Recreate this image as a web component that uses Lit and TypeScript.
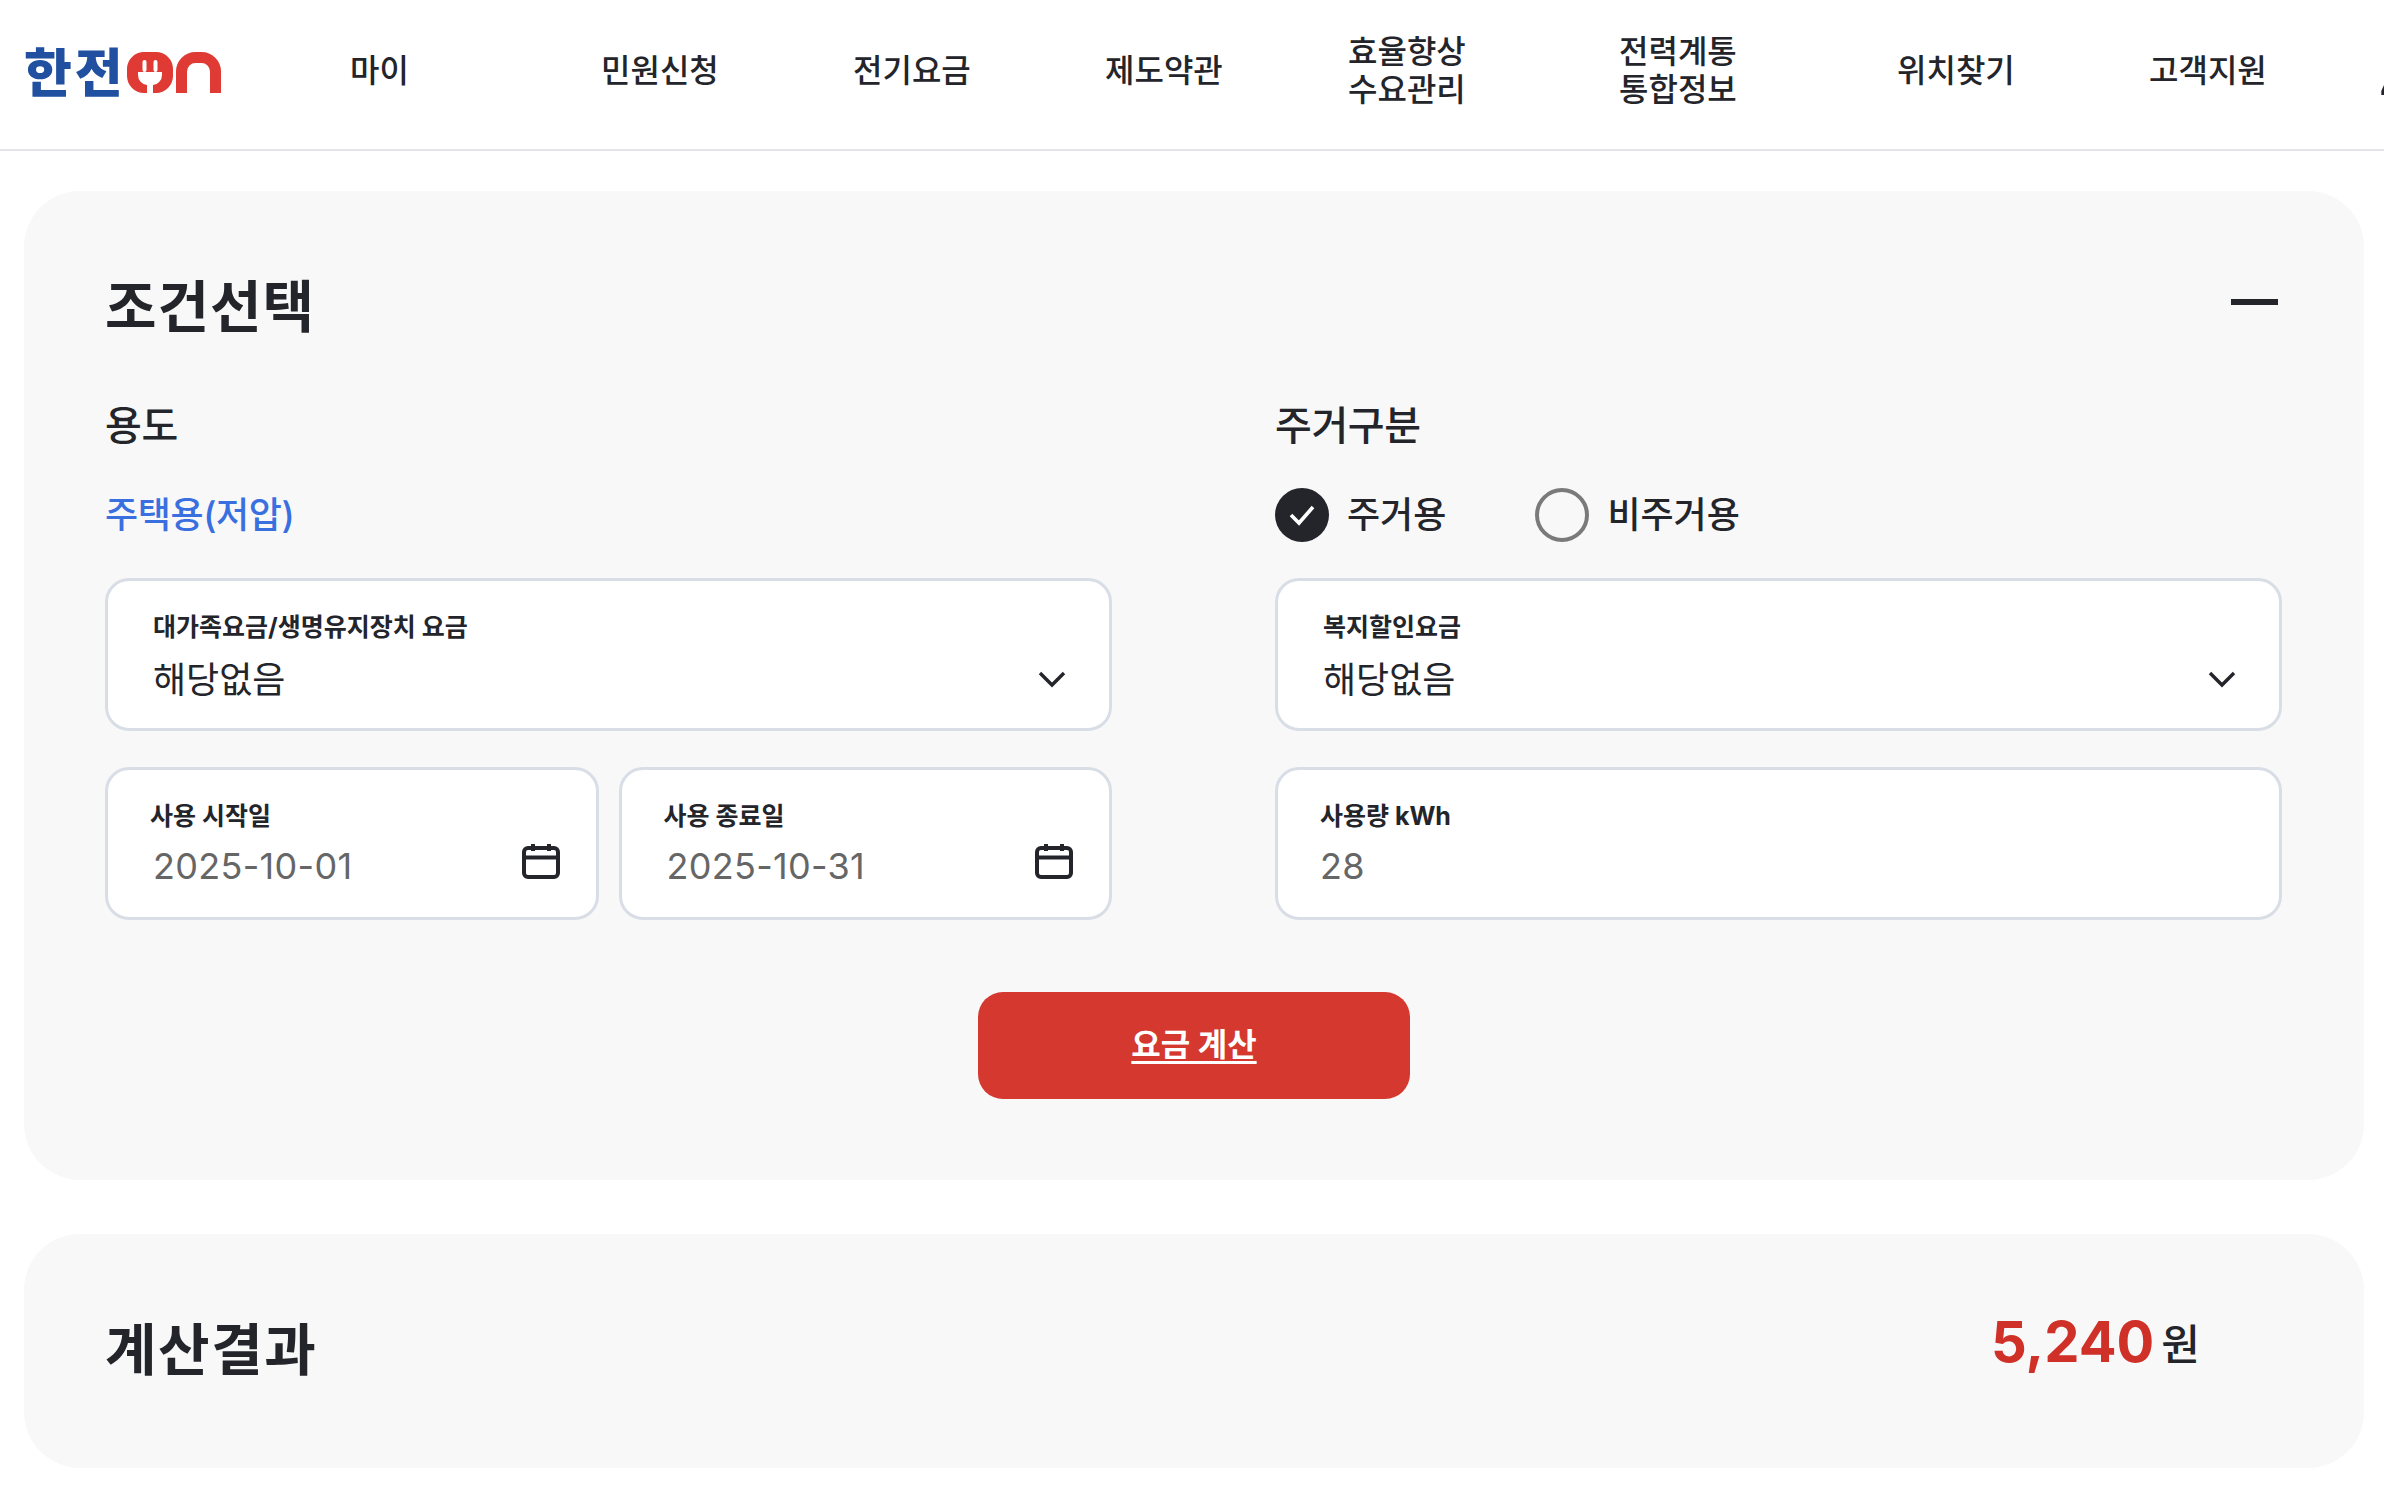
import { LitElement, html, css } from "lit";
import { customElement } from "lit/decorators.js";

const NAV: { t: string[]; w: number }[] = [
  { t: ["마이"], w: 251 },
  { t: ["민원신청"], w: 252 },
  { t: ["전기요금"], w: 252 },
  { t: ["제도약관"], w: 243 },
  { t: ["효율향상", "수요관리"], w: 271 },
  { t: ["전력계통", "통합정보"], w: 278 },
  { t: ["위치찾기"], w: 252 },
  { t: ["고객지원"], w: 232 },
];

const chevron = html`<svg class="chev" width="28" height="18" viewBox="0 0 28 18" fill="none"><path d="M2 3l12 12L26 3" stroke="#23252b" stroke-width="3.4"/></svg>`;
const calendar = html`<svg class="cal" width="38" height="36" viewBox="0 0 38 36" fill="none"><rect x="2" y="5" width="34" height="29" rx="4" stroke="#23252b" stroke-width="4"/><path d="M2 14.500h34" stroke="#23252b" stroke-width="4"/><path d="M11 1v7M27 1v7" stroke="#23252b" stroke-width="4"/></svg>`;

@customElement("app-root")
export class AppRoot extends LitElement {
  static styles = css`
    :host { display: block; width: 2384px; height: 1486px; overflow: hidden; background: #fff; color: #23252b;
      font-family: Inter, "Noto Sans CJK KR", sans-serif; }
    * { box-sizing: border-box; }
    header { height: 151px; border-bottom: 2px solid #e4e4ea; display: flex; align-items: flex-start; padding-left: 24px; overflow: hidden; }
    .logo { width: 326px; height: 148px; flex: none; display: flex; align-items: flex-start; padding-top: 49px; }
    .logo .ko { font: 900 52px/41px "Noto Sans CJK KR", sans-serif; color: #20509f; width: 103px; letter-spacing: 3px; white-space: nowrap; }
    .logo svg { display: block; margin-top: 3px; }
    nav { display: grid; align-items: center; height: 142px; font-size: 32px; line-height: 38px; font-weight: 500; }
    .item { white-space: nowrap; }
    .item span { display: block; }
    .sliver { align-self: start; margin-top: 85px; display: block; }
    main { padding: 40px 20px 18px 24px; display: flex; flex-direction: column; gap: 54px; }
    .card { background: #f8f8f8; border-radius: 56px; }
    .cond { padding: 82px 82px 0 81px; height: 989px; }
    .titlebar { display: flex; justify-content: space-between; align-items: center; height: 68px; }
    h2 { margin: 0; font-size: 56px; line-height: 68px; font-weight: 700; letter-spacing: 1px; }
    .minus { width: 47px; height: 6px; background: #23252b; margin: 0 4px 10px 0; }
    .cols { display: grid; grid-template-columns: 1007px 1007px; column-gap: 163px; margin-top: 61px; }
    .col { display: flex; flex-direction: column; }
    h3 { margin: 0; font-size: 40px; line-height: 48px; font-weight: 500; letter-spacing: -0.4px; }
    .sub { height: 54px; margin-top: 38px; margin-bottom: 36px; display: flex; align-items: center; font-size: 36px; }
    .sub .txt { margin-bottom: 6px; }
    .blue { color: #3a6fe0; font-weight: 500; letter-spacing: -0.4px; }
    .radio { display: flex; align-items: center; gap: 18px; margin-right: 89px; font-weight: 500; }
    .dot { width: 54px; height: 54px; border-radius: 50%; flex: none; display: flex; align-items: center; justify-content: center; }
    .dot.on { background: #23252b; }
    .dot.off { border: 4px solid #7a7a7a; }
    .field { height: 153px; background: #fff; border: 3px solid #d9dee6; border-radius: 24px; padding: 29px 45px 0; display: flex; justify-content: space-between; }
    .gap { margin-top: 36px; }
    .pair { display: grid; grid-template-columns: 1fr 1fr; gap: 20px; margin-top: 36px; }
    .pair .field, .usage { padding-left: 42px; }
    .lab { font-size: 25px; line-height: 34px; font-weight: 700; white-space: nowrap; }
    .val { font-size: 36px; line-height: 44px; margin-top: 14px; white-space: nowrap; }
    .val.grey { color: #666; padding-left: 3px; margin-top: 11px; letter-spacing: 0.3px; }
    .usage .val.grey { padding-left: 0; }
    .chev { margin-top: 60px; margin-right: -2px; }
    .cal { margin-top: 44px; margin-right: -9px; }
    .actions { display: flex; justify-content: center; margin-top: 72px; margin-left: 1px; }
    button { width: 432px; height: 107px; border: 0; border-radius: 25px; background: #d5382e; color: #fff; padding-bottom: 8px; font: 700 32px Inter, "Noto Sans CJK KR", sans-serif; text-decoration: underline; text-underline-offset: 5px; }
    .result { height: 234px; padding: 0 164px 0 81px; display: flex; align-items: center; justify-content: space-between; }
    .result h2 { margin-bottom: 3px; letter-spacing: 1.6px; }
    .total { display: flex; align-items: baseline; gap: 7px; margin-bottom: 18px; }
    .num { font-size: 56px; font-weight: 700; color: #cf3027; line-height: 70px; }
    .won { font-size: 42px; font-weight: 500; transform: translateY(-2px); }
  `;

  render() {
    const cols = NAV.map((n) => n.w + "px").join(" ") + " 3px";
    return html`
      <header>
        <div class="logo">
          <span class="ko">한전</span>
          <svg width="94" height="41" viewBox="0 0 94 41">
            <rect width="46" height="41" rx="17" fill="#df3a33"/>
            <path d="M11 20h24v3a10 10 0 0 1-9 10v8h-6v-8a10 10 0 0 1-9-10z" fill="#fff"/>
            <rect x="15.500" y="8" width="4" height="12" rx="2" fill="#fff"/>
            <rect x="26.500" y="8" width="4" height="12" rx="2" fill="#fff"/>
            <path d="M54.500 41V19.500A14 14 0 0 1 68.500 5.500h6A14 14 0 0 1 88.500 19.500V41" fill="none" stroke="#df3a33" stroke-width="11"/>
          </svg>
        </div>
        <nav style="grid-template-columns:${cols}">
          ${NAV.map((n) => html`<div class="item">${n.t.map((l) => html`<span>${l}</span>`)}</div>`)}
          <svg class="sliver" width="3" height="10" viewBox="0 0 3 10"><path d="M3 0v10H0.300V6z" fill="#23252b"/></svg>
        </nav>
      </header>
      <main>
        <section class="card cond">
          <div class="titlebar"><h2>조건선택</h2><div class="minus"></div></div>
          <div class="cols">
            <div class="col">
              <h3>용도</h3>
              <div class="sub blue"><span class="txt">주택용(저압)</span></div>
              <div class="field">
                <div><div class="lab">대가족요금/생명유지장치 요금</div><div class="val">해당없음</div></div>
                ${chevron}
              </div>
              <div class="pair">
                <div class="field">
                  <div><div class="lab">사용 시작일</div><div class="val grey">2025-10-01</div></div>${calendar}
                </div>
                <div class="field">
                  <div><div class="lab">사용 종료일</div><div class="val grey">2025-10-31</div></div>${calendar}
                </div>
              </div>
            </div>
            <div class="col">
              <h3>주거구분</h3>
              <div class="sub">
                <div class="radio"><span class="dot on"><svg width="28" height="22" viewBox="0 0 28 22" fill="none"><path d="M3 11l8 8L25 3" stroke="#fff" stroke-width="3.6"/></svg></span><span class="txt">주거용</span></div>
                <div class="radio"><span class="dot off"></span><span class="txt">비주거용</span></div>
              </div>
              <div class="field">
                <div><div class="lab">복지할인요금</div><div class="val">해당없음</div></div>
                ${chevron}
              </div>
              <div class="field gap usage">
                <div><div class="lab">사용량 kWh</div><div class="val grey">28</div></div>
              </div>
            </div>
          </div>
          <div class="actions"><button>요금 계산</button></div>
        </section>
        <section class="card result">
          <h2>계산결과</h2>
          <div class="total"><span class="num">5,240</span><span class="won">원</span></div>
        </section>
      </main>
    `;
  }
}
